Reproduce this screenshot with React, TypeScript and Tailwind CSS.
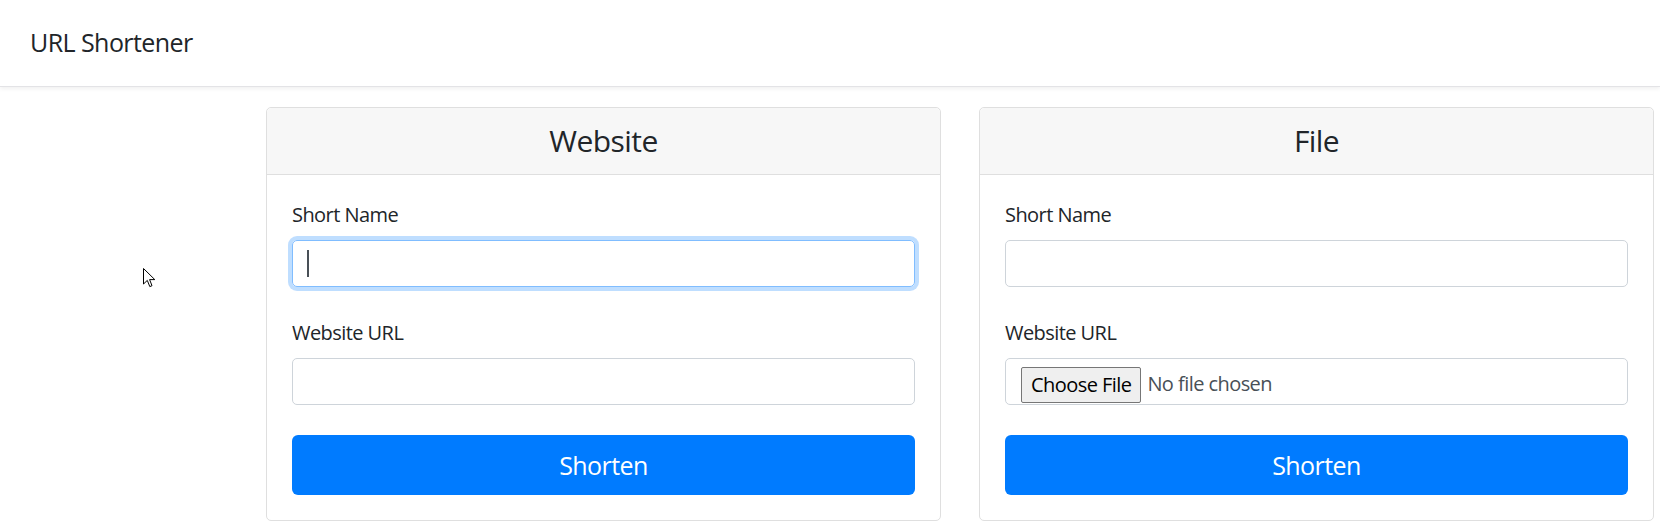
import { useState } from "react";

const font = { fontFamily: '"Open Sans", "Noto Sans", sans-serif' };

const Label = ({ children }: { children: string }) => (
  <label className="block text-[20px] leading-[30px] mb-[10px] text-[#212529]">{children}</label>
);

const Card = ({ title, children }: { title: string; children: React.ReactNode }) => (
  <div className="w-[675px] border border-[#dfdfdf] rounded-[5px] bg-white">
    <div className="h-[67px] flex items-center justify-center bg-[#f7f7f7] border-b border-[#dfdfdf] rounded-t-[5px]">
      <h4 className="text-[30px] leading-[36px] text-[#212529]">{title}</h4>
    </div>
    <div className="p-[25px]">{children}</div>
  </div>
);

const ShortenButton = () => (
  <button className="w-full h-[60px] rounded-[6px] bg-[#007bff] text-white text-[25px] leading-[37px]">
    Shorten
  </button>
);

export default function App() {
  const [name, setName] = useState("");

  return (
    <div className="relative min-h-[525px] bg-white tracking-[-0.035em]" style={font}>
      {/* navbar */}
      <nav className="h-[87px] flex items-center pl-[30px] bg-white border-b border-[#e3e3e6] shadow-[0_2px_4px_rgba(0,0,0,0.06)]">
        <span className="text-[25px] text-[#212529]">URL Shortener</span>
      </nav>

      <div className="flex gap-[38px] pl-[266px] pt-[20px]">
        <Card title="Website">
          <Label>Short Name</Label>
          <div className="relative mb-[31px]">
            <input
              value={name}
              onChange={(e) => setName(e.target.value)}
              className="block w-full h-[47px] px-[15px] text-[20px] text-[#495057] border border-[#80bdff] rounded-[5px] outline-none shadow-[0_0_0_4px_rgba(0,123,255,0.25)] caret-transparent"
            />
            <span className="absolute left-[15px] top-[10px] w-[2px] h-[27px] bg-[#495057]" />
          </div>
          <Label>Website URL</Label>
          <input className="block w-full h-[47px] px-[15px] mb-[30px] text-[20px] text-[#495057] border border-[#ced4da] rounded-[5px] outline-none" />
          <ShortenButton />
        </Card>

        <Card title="File">
          <Label>Short Name</Label>
          <input className="block w-full h-[47px] px-[15px] mb-[31px] text-[20px] text-[#495057] border border-[#ced4da] rounded-[5px] outline-none" />
          <Label>Website URL</Label>
          <div className="flex items-start h-[47px] pl-[15px] pt-[8px] mb-[30px] border border-[#ced4da] rounded-[5px]">
            <button className="h-[36px] px-[9px] bg-[#efefef] border border-[#767676] rounded-[2px] text-[20px] leading-[28px] text-black">
              Choose File
            </button>
            <span className="ml-[6px] text-[20px] leading-[34px] text-[#495057]">No file chosen</span>
          </div>
          <ShortenButton />
        </Card>
      </div>

      {/* mouse pointer */}
      <svg className="absolute left-[143px] top-[268px]" width="13" height="20" viewBox="0 0 13 20">
        <path d="M0.5 0.5 L0.5 16 L4.3 12.4 L6.8 18.6 L9 17.7 L6.6 11.6 L11.8 11.6 Z" fill="white" stroke="black" strokeWidth="1" strokeLinejoin="round" />
      </svg>
    </div>
  );
}
